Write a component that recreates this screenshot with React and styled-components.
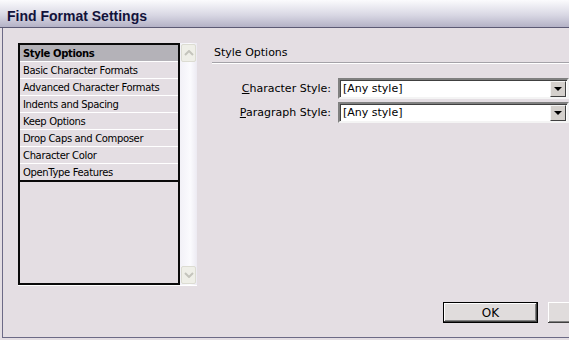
import React from 'react'
import styled, { createGlobalStyle } from 'styled-components'

const GlobalStyle = createGlobalStyle`
  html, body { margin: 0; padding: 0; background: #e4dee3; }
  body { width: 569px; height: 340px; overflow: hidden; }
`

const items = [
  'Style Options',
  'Basic Character Formats',
  'Advanced Character Formats',
  'Indents and Spacing',
  'Keep Options',
  'Drop Caps and Composer',
  'Character Color',
  'OpenType Features',
]

const Chevron = ({ down }) => (
  <svg width="10" height="6" viewBox="0 0 10 6">
    <path
      d={down ? 'M1 1 L5 5 L9 1' : 'M1 5 L5 1 L9 5'}
      fill="none"
      stroke="#c4c4bc"
      strokeWidth="2"
    />
  </svg>
)

const App = () => {
  return (
    <Window>
      <GlobalStyle />
      <TitleBar>Find Format Settings</TitleBar>
      <Body>
        <ListBox>
          <List>
            {items.map((t, i) => (
              <Item key={t} selected={i === 0}>{t}</Item>
            ))}
          </List>
          <ScrollBar>
            <ScrollButton><Chevron /></ScrollButton>
            <ScrollButton><Chevron down /></ScrollButton>
          </ScrollBar>
        </ListBox>
        <Pane>
          <SectionTitle>Style Options</SectionTitle>
          <Fields>
            <Label><u>C</u>haracter Style:</Label>
            <Select>
              <span>[Any style]</span>
              <DropButton><Arrow /></DropButton>
            </Select>
            <Label><u>P</u>aragraph Style:</Label>
            <Select>
              <span>[Any style]</span>
              <DropButton><Arrow /></DropButton>
            </Select>
          </Fields>
          <Buttons>
            <Button primary>OK</Button>
            <Button aria-label="Cancel" />
          </Buttons>
        </Pane>
      </Body>
    </Window>
  )
}

export default App

const Window = styled.div`
  width: 569px;
  height: 340px;
  display: flex;
  flex-direction: column;
  overflow: hidden;
  font-family: "DejaVu Sans", Tahoma, sans-serif;
  color: #000;
`

const TitleBar = styled.div`
  height: 28px;
  box-sizing: border-box;
  padding: 8px 0 0 7px;
  background: linear-gradient(#fbfbfd, #d9d8e4 55%, #b4b2c6);
  border-bottom: 1px solid #5c5a74;
  font-family: "Liberation Sans", Arial, sans-serif;
  font-size: 14px;
  font-weight: bold;
  color: #12123a;
`

const Body = styled.div`
  flex: 1;
  display: flex;
  align-items: flex-start;
  margin-left: 2px;
  margin-bottom: 2px;
  border-left: 1px solid #6c6a86;
  border-bottom: 1px solid #6c6a86;
  padding: 15px 0 0 15px;
`

const ListBox = styled.div`
  width: 179px;
  height: 243px;
  box-sizing: border-box;
  display: flex;
  border-bottom: 1px solid #fff;
  flex-shrink: 0;
`

const List = styled.div`
  flex: 1;
  border: 2px solid #0a0a0a;
  display: flex;
  flex-direction: column;
`

const Item = styled.div`
  height: 16px;
  line-height: 17px;
  padding-left: 3px;
  font-size: 10px;
  font-weight: ${p => (p.selected ? 'bold' : 'normal')};
  background: ${p => (p.selected ? '#b4b2b8' : 'transparent')};
  border-bottom: 1px solid #fff;
  letter-spacing: -0.35px;
  white-space: nowrap;
  &:last-child {
    border-bottom: 2px solid #0a0a0a;
  }
`

const ScrollBar = styled.div`
  width: 17px;
  display: flex;
  flex-direction: column;
  justify-content: space-between;
  background: linear-gradient(90deg, #f2f1f7, #fbfbfe 60%, #eceaf2);
`

const ScrollButton = styled.div`
  height: 16px;
  margin: 1px;
  display: flex;
  align-items: center;
  justify-content: center;
  background: #efefe8;
  border: 1px solid #dcdcd2;
  border-radius: 2px;
`

const Pane = styled.div`
  flex: 1;
  margin-left: 15px;
  display: flex;
  flex-direction: column;
`

const SectionTitle = styled.div`
  font-size: 11px;
  height: 19px;
  line-height: 19px;
  padding-left: 2px;
  border-bottom: 1px solid #a4a2a8;
  box-shadow: 0 1px 0 #fff;
`

const Fields = styled.div`
  display: grid;
  grid-template-columns: 119px 231px;
  column-gap: 7px;
  row-gap: 3px;
  margin-top: 15px;
  align-items: center;
`

const Label = styled.div`
  text-align: right;
  font-size: 11px;
  white-space: nowrap;
  u { text-decoration: underline; }
`

const Select = styled.div`
  height: 21px;
  box-sizing: border-box;
  display: flex;
  align-items: center;
  justify-content: space-between;
  background: #fff;
  border: 2px solid;
  border-color: #808080 #f4f4f4 #f4f4f4 #808080;
  box-shadow: inset 1px 1px 0 #404040;
  padding-left: 3px;
  font-size: 11px;
  span { white-space: nowrap; }
`

const DropButton = styled.div`
  width: 16px;
  height: 16px;
  margin-right: 1px;
  box-sizing: border-box;
  background: #d4d0cc;
  border: 1px solid;
  border-color: #f4f4f4 #404040 #404040 #f4f4f4;
  display: flex;
  align-items: center;
  justify-content: center;
`

const Arrow = styled.div`
  width: 0;
  height: 0;
  border-left: 4px solid transparent;
  border-right: 4px solid transparent;
  border-top: 4px solid #000;
`

const Buttons = styled.div`
  display: flex;
  gap: 10px;
  margin-top: 179px;
  padding-left: 231px;
`

const Button = styled.div`
  width: 95px;
  height: 21px;
  flex-shrink: 0;
  box-sizing: border-box;
  display: flex;
  align-items: center;
  justify-content: center;
  font-size: 12px;
  background: #e0dcdc;
  border: ${p => (p.primary ? '1px solid #000' : 'none')};
  box-shadow: inset -1px -1px 0 #404040, inset 1px 1px 0 #fff, inset -2px -2px 0 #808080;
`
